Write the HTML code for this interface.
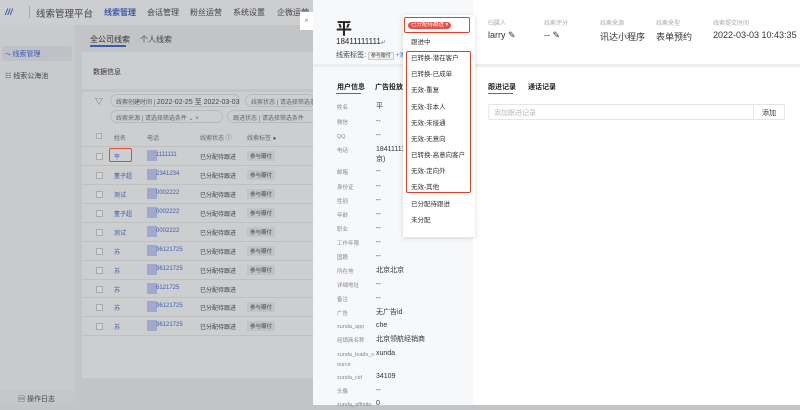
<!DOCTYPE html><html><head><meta charset="utf-8"><style>
*{margin:0;padding:0;box-sizing:border-box}
body{width:800px;height:405px;overflow:hidden;position:relative;font-family:"Liberation Sans","Noto Sans CJK SC",sans-serif;background:#c3c4c6;color:#333}
.a{position:absolute;white-space:nowrap}
.s7{font-size:7px}.s8{font-size:8px}.s9{font-size:9px}
</style></head><body>
<div class="a" style="left:0;top:0;width:313px;height:25px;background:#cdced0"></div>
<div class="a" style="left:5px;top:7px;font-size:9px;color:#3a5bb0;font-weight:bold;font-style:italic">///</div>
<div class="a" style="left:29px;top:6px;width:1px;height:12px;background:#aaa"></div>
<div class="a" style="left:36px;top:6px;font-size:9.5px;color:#444">线索管理平台</div>
<div class="a s8" style="left:104px;top:7px;color:#3a5bb0;font-weight:bold">线索管理</div>
<div class="a s8" style="left:147px;top:7px;color:#444">会话管理</div>
<div class="a s8" style="left:190px;top:7px;color:#444">粉丝运营</div>
<div class="a s8" style="left:233px;top:7px;color:#444">系统设置</div>
<div class="a s8" style="left:277px;top:7px;color:#444">企微运营</div>
<div class="a" style="left:0;top:25px;width:75px;height:380px;background:#c9cacc"></div>
<div class="a" style="left:2px;top:46px;width:70px;height:15px;background:#bfc1c6;border-radius:2px"></div>
<div class="a s7" style="left:5px;top:49px;color:#3a5bb0">⤳ 线索管理</div>
<div class="a s7" style="left:5px;top:71px;color:#444">☷ 线索公海池</div>
<div class="a" style="left:0;top:390px;width:75px;height:15px;background:#c5c6c8"></div>
<div class="a s7" style="left:18px;top:394px;color:#444">▤ 操作日志</div>
<div class="a s8" style="left:90px;top:34px;color:#333">全公司线索</div>
<div class="a" style="left:90px;top:45px;width:36px;height:2px;background:#3a5bb0"></div>
<div class="a s8" style="left:140px;top:34px;color:#444">个人线索</div>
<div class="a" style="left:82px;top:52px;width:231px;height:37px;background:#cdced0"></div>
<div class="a s7" style="left:93px;top:67px;color:#333">数据信息</div>
<div class="a" style="left:82px;top:92px;width:231px;height:286px;background:#cdced0"></div>
<div class="a s8" style="left:95px;top:96px;color:#555">▽</div>
<div class="a" style="left:110px;top:94px;width:130px;height:13px;border:1px solid #b8b9bb;border-radius:7px"></div>
<div class="a s7" style="left:116px;top:97px;color:#555;font-size:6px">线索创建时间 | <span style="font-size:7px;color:#444">2022-02-25 至 2022-03-03</span></div>
<div class="a" style="left:245px;top:94px;width:70px;height:13px;border:1px solid #b8b9bb;border-radius:7px"></div>
<div class="a" style="left:251px;top:97px;font-size:6px;color:#666">线索状态 | 请选择筛选条件</div>
<div class="a" style="left:110px;top:110px;width:113px;height:13px;border:1px solid #b8b9bb;border-radius:7px"></div>
<div class="a" style="left:116px;top:113px;font-size:6px;color:#666">线索来源 | 请选择筛选条件 ⌄ ×</div>
<div class="a" style="left:227px;top:110px;width:90px;height:13px;border:1px solid #b8b9bb;border-radius:7px"></div>
<div class="a" style="left:233px;top:113px;font-size:6px;color:#666">跟进状态 | 请选择筛选条件</div>
<div id="tbl"></div>
<div class="a" style="left:109px;top:148px;width:23px;height:14px;border:1px solid #e0502a;border-radius:2px"></div>
<div class="a" style="left:300px;top:12px;width:13px;height:18px;background:#fff;color:#999;font-size:8px;text-align:center;line-height:18px">×</div>
<div class="a" style="left:313px;top:0;width:487px;height:405px;background:#fff"></div>
<div class="a" style="left:313px;top:0;width:160px;height:405px;background:#f7f8fa"></div>
<div class="a" style="left:313px;top:64px;width:487px;height:3px;background:#eceef1"></div>
<div class="a" style="left:336px;top:15px;font-size:16px;font-weight:bold;color:#222">平</div>
<div class="a s8" style="left:336px;top:37px;color:#222">18411111111<span style="color:#3a6de0">⤶</span></div>
<div class="a s7" style="left:336px;top:50px;color:#444">线索标签: <span style="border:1px solid #ccc;background:#f0f0f0;padding:0 2px;font-size:5px">参与瓣付</span> <span style="color:#3a6de0;font-size:6px">+添加</span></div>
<div class="a" style="left:488px;top:18px;font-size:6px;color:#aaa">归属人</div>
<div class="a" style="left:544px;top:18px;font-size:6px;color:#aaa">线索评分</div>
<div class="a" style="left:600px;top:18px;font-size:6px;color:#aaa">线索来源</div>
<div class="a" style="left:656px;top:18px;font-size:6px;color:#aaa">线索来型</div>
<div class="a" style="left:713px;top:18px;font-size:6px;color:#aaa">线索提交时间</div>
<div class="a s9" style="left:488px;top:30px;color:#333">larry ✎</div>
<div class="a s9" style="left:544px;top:30px;color:#333">-- ✎</div>
<div class="a s9" style="left:600px;top:30px;color:#333">讯达小程序</div>
<div class="a s9" style="left:656px;top:30px;color:#333">表单预约</div>
<div class="a s9" style="left:713px;top:30px;color:#333">2022-03-03 10:43:35</div>
<div class="a s7" style="left:337px;top:82px;color:#222;font-weight:bold">用户信息</div>
<div class="a" style="left:336px;top:93px;width:25px;height:1px;background:#3a6de0"></div>
<div class="a s7" style="left:375px;top:82px;color:#222;font-weight:bold">广告投放信</div>
<div class="a s7" style="left:488px;top:82px;color:#222;font-weight:bold">跟进记录</div>
<div class="a" style="left:488px;top:93px;width:25px;height:1px;background:#3a6de0"></div>
<div class="a s7" style="left:528px;top:82px;color:#222;font-weight:bold">通话记录</div>
<div class="a" style="left:488px;top:104px;width:297px;height:16px;border:1px solid #e3e5e8;border-radius:2px"></div>
<div class="a" style="left:753px;top:104px;width:1px;height:16px;background:#e3e5e8"></div>
<div class="a s7" style="left:494px;top:108px;color:#bbb">添加跟进记录</div>
<div class="a s7" style="left:762px;top:108px;color:#333">添加</div>
<div id="info"></div>
<div class="a" style="left:403px;top:15px;width:72px;height:222px;background:#fff;box-shadow:0 1px 5px rgba(0,0,0,.15)"></div>
<div class="a" style="left:404px;top:17px;width:66px;height:16px;border:1px solid #e0402a;border-radius:2px"></div>
<div class="a" style="left:408px;top:22px;background:#e8504a;color:#fff;font-size:5.5px;padding:0 3px;border-radius:5px;line-height:7px">已分配待跟进 ▾</div>
<div class="a" style="left:406px;top:51px;width:65px;height:142px;border:1px solid #e0402a;border-radius:2px"></div>
<div id="dd"></div>
<script>
var h='';
var rows=[["平","1111111","参与瓣付"],["董子超","2341234","参与瓣付"],["测试","0002222","参与瓣付"],["董子超","0002222","参与瓣付"],["测试","0002222","参与瓣付"],["苏","36121725","参与瓣付"],["苏","36121725","参与瓣付"],["苏","6121725",""],["苏","36121725","参与瓣付"],["苏","36121725","参与瓣付"]];
h+='<div class="a" style="left:96px;top:133px;width:6px;height:6px;border:1px solid #aaa;background:#d5d6d8"></div><div class="a" style="left:114px;top:133px;font-size:6px;color:#666">姓名</div><div class="a" style="left:147px;top:133px;font-size:6px;color:#666">电话</div><div class="a" style="left:200px;top:133px;font-size:6px;color:#666">线索状态 ⓘ</div><div class="a" style="left:247px;top:133px;font-size:6px;color:#666">线索标签 <span style="color:#3a5bb0">●</span></div>';
var ys=[156,175,194,213,232,251,270,289,307,326];
rows.forEach(function(r,i){var y=ys[i];
h+='<div class="a" style="left:82px;top:'+(y-10)+'px;width:231px;height:1px;background:#bfc0c2"></div>';
h+='<div class="a" style="left:96px;top:'+(y-3)+'px;width:7px;height:7px;border:1px solid #aaa;background:#d5d6d8"></div>';
h+='<div class="a" style="left:114px;top:'+(y-4)+'px;font-size:6px;color:#3a5bb0">'+r[0]+'</div>';
h+='<div class="a" style="left:147px;top:'+(y-6)+'px;width:10px;height:11px;background:#9ea9cc"></div>';
h+='<div class="a" style="left:156px;top:'+(y-4)+'px;font-size:6px;color:#3a5bb0">'+r[1]+'</div>';
h+='<div class="a" style="left:200px;top:'+(y-4)+'px;font-size:6px;color:#444">已分配待跟进</div>';
if(r[2])h+='<div class="a" style="left:247px;top:'+(y-5)+'px;font-size:5.5px;color:#444;background:#c2c3c6;padding:1px 3px">'+r[2]+'</div>';
});
h+='<div class="a" style="left:82px;top:335px;width:231px;height:1px;background:#bfc0c2"></div>';
document.getElementById('tbl').innerHTML=h;
var info=[["姓名","平",107],["微信","--",122],["QQ","--",136],["电话","18411111111<br>京)",150],["邮箱","--",172],["身份证","--",187],["性别","--",201],["年龄","--",215],["职业","--",229],["工作年限","--",243],["国籍","--",257],["所在地","北京北京",271],["详细地址","--",285],["备注","--",299],["广告","无广告id",313],["xunda_app","che",326],["经销商名称","北京领航经销商",340],["xunda_leads_s<br>ource","xunda",354],["xunda_cid","34109",377],["头像","--",391],["xunda_affmitu","0",404]];
h='';info.forEach(function(r){h+='<div class="a" style="left:337px;top:'+(r[2]-4)+'px;font-size:5.5px;color:#888;line-height:10px">'+r[0]+'</div><div class="a" style="left:376px;top:'+(r[2]-5)+'px;font-size:7px;color:#333;line-height:10px">'+r[1]+'</div>';});
document.getElementById('info').innerHTML=h;
var dd=[["跟进中",40],["已转换-潜在客户",56],["已转换-已成单",72],["无效-重复",88],["无效-非本人",105],["无效-未接通",121],["无效-无意向",137],["已转换-高意向客户",153],["无效-定向外",169],["无效-其他",185],["已分配待跟进",202],["未分配",218]];
h='';dd.forEach(function(r){h+='<div class="a" style="left:411px;top:'+(r[1]-4)+'px;font-size:6.5px;color:#333">'+r[0]+'</div>';});
document.getElementById('dd').innerHTML=h;
</script>
</body></html>
